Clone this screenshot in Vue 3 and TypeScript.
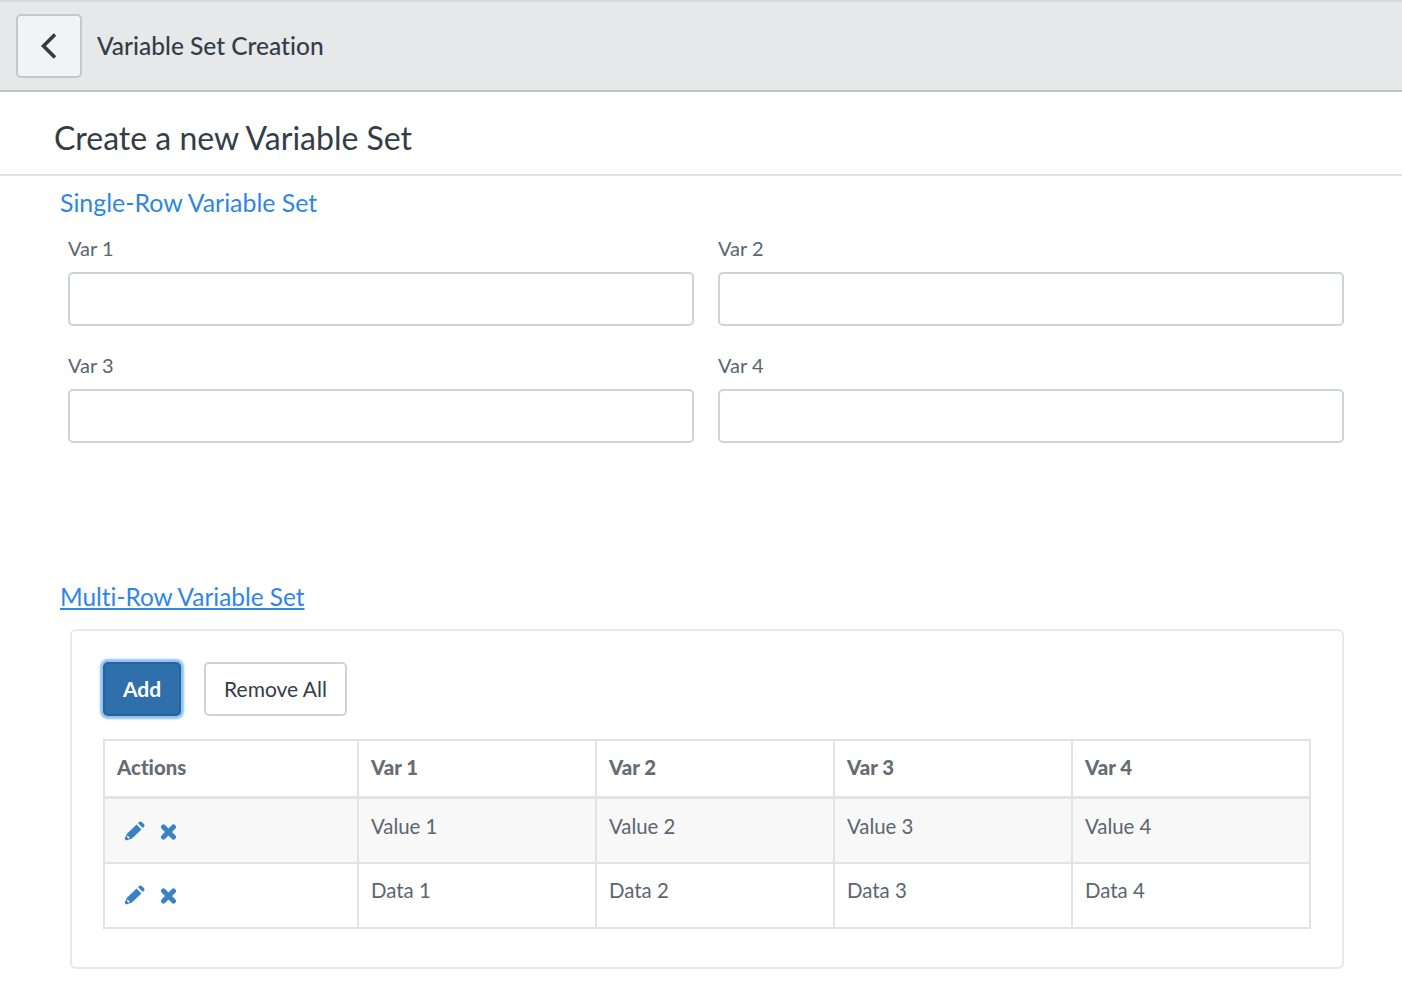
<template>
  <div class="page">
    <header class="top-bar">
      <button class="back-btn" aria-label="Back">
        <svg width="18" height="28" viewBox="0 0 18 28" fill="none" stroke="#343d47" stroke-width="3.6">
          <path d="M15 2.5 L3.5 14 L15 25.5" />
        </svg>
      </button>
      <h1 class="top-title">Variable Set Creation</h1>
    </header>

    <div class="heading-row">
      <h2>Create a new Variable Set</h2>
    </div>

    <section class="single-row">
      <h3 class="section-title">Single-Row Variable Set</h3>
      <div class="field-grid">
        <div v-for="field in fields" :key="field" class="field">
          <label>{{ field }}</label>
          <input type="text" />
        </div>
      </div>
    </section>

    <section class="multi-row">
      <h3 class="section-title linked"><a href="#">Multi-Row Variable Set</a></h3>
      <div class="panel">
        <div class="toolbar">
          <button class="btn btn-primary">Add</button>
          <button class="btn btn-default">Remove All</button>
        </div>
        <table>
          <thead>
            <tr>
              <th class="col-actions">Actions</th>
              <th v-for="field in fields" :key="field">{{ field }}</th>
            </tr>
          </thead>
          <tbody>
            <tr v-for="(row, i) in rows" :key="i" :class="{ striped: i === 0 }">
              <td class="actions-cell">
                <svg class="icon" width="21" height="20" viewBox="0 0 21 20" fill="#3b82c4">
                  <path d="M12.6 3.6 L17.4 8.4 L8 17.6 L2.2 19.6 L0.6 18 L2.9 12.8 Z" />
                  <path d="M14 2.2 L15.2 1 C16 0.2 17 0.2 17.8 1 L20 3.2 C20.8 4 20.8 5 20 5.8 L18.8 7 Z" />
                  <path d="M3.6 14.6 L5.9 16.9 L4.4 17.5 L3 16.1 Z" fill="#fff" />
                </svg>
                <svg class="icon" width="17" height="16" viewBox="0 0 17 16" fill="none" stroke="#3b82c4" stroke-width="5" stroke-linecap="round">
                  <path d="M3.5 3 L13.5 13 M13.5 3 L3.5 13" />
                </svg>
              </td>
              <td v-for="cell in row" :key="cell">{{ cell }}</td>
            </tr>
          </tbody>
        </table>
      </div>
    </section>
  </div>
</template>

<script setup lang="ts">
const fields: string[] = ['Var 1', 'Var 2', 'Var 3', 'Var 4'];

const rows: string[][] = [
  ['Value 1', 'Value 2', 'Value 3', 'Value 4'],
  ['Data 1', 'Data 2', 'Data 3', 'Data 4']
];
</script>

<style>
html, body {
  margin: 0;
  background: #fff;
}
</style>

<style scoped>
.page {
  height: 1006px;
  overflow: hidden;
  font-family: Lato, "Noto Sans", sans-serif;
  font-variant-ligatures: none;
  color: #343d47;
}

.top-bar {
  display: flex;
  align-items: center;
  box-sizing: border-box;
  height: 92px;
  padding-left: 16px;
  background: #e6e8ea;
  border-top: 2px solid #d5d7da;
  border-bottom: 2px solid #bfc2c6;
}

.back-btn {
  display: flex;
  align-items: center;
  justify-content: center;
  box-sizing: border-box;
  width: 66px;
  height: 64px;
  padding: 0;
  background: #f2f3f5;
  border: 2px solid #c4c7cb;
  border-radius: 5px;
}

.top-title {
  margin: 0 0 0 15px;
  font-size: 24.5px;
  font-weight: 500;
  line-height: 1;
}

.heading-row {
  box-sizing: border-box;
  height: 84px;
  padding: 27px 0 0 54px;
  border-bottom: 2px solid #dfe1e3;
}

.heading-row h2 {
  margin: 0;
  font-size: 32px;
  font-weight: 400;
  line-height: 38px;
}

.section-title {
  margin: 0 0 0 60px;
  font-size: 24.9px;
  font-weight: 400;
  line-height: 32px;
  color: #2f86e4;
}

.section-title.linked {
  font-size: 24.4px;
}

.section-title a {
  color: #2f86e4;
}

.single-row {
  padding-top: 10px;
}

.field-grid {
  display: grid;
  grid-template-columns: 626px 626px;
  column-gap: 24px;
  row-gap: 27px;
  margin: 18px 0 0 68px;
}

.field label {
  display: block;
  font-size: 20px;
  line-height: 24px;
  color: #5b6670;
}

.field input {
  display: block;
  box-sizing: border-box;
  width: 100%;
  height: 54px;
  margin-top: 12px;
  border: 2px solid #d0d3d6;
  border-radius: 5px;
  background: #fff;
}

.multi-row {
  padding-top: 138px;
}

.panel {
  box-sizing: border-box;
  width: 1274px;
  height: 340px;
  margin: 16px 0 0 70px;
  padding: 31px 30px 0;
  border: 2px solid #e8e9eb;
  border-radius: 6px;
}

.toolbar {
  display: flex;
  align-items: center;
  gap: 23px;
}

.btn {
  box-sizing: border-box;
  height: 54px;
  padding: 0 0 2px;
  font-family: inherit;
  font-size: 21px;
  border-radius: 5px;
}

.btn-primary {
  width: 78px;
  margin-left: 1px;
  color: #fff;
  font-weight: 700;
  background: #2f6fab;
  border: 2px solid #2a639a;
  box-shadow: 0 0 2px 3px #8fc3f5;
}

.btn-default {
  width: 143px;
  color: #343d47;
  background: #fff;
  border: 2px solid #d0d3d6;
}

table {
  width: 1208px;
  margin: 23px 0 0 1px;
  border-collapse: collapse;
  table-layout: fixed;
  font-size: 20.4px;
}

th, td {
  border: 2px solid #e2e3e5;
  padding: 0 0 0 12px;
  text-align: left;
  vertical-align: top;
  box-sizing: border-box;
}

th {
  height: 57px;
  padding-bottom: 2px;
  vertical-align: middle;
  font-weight: 900;
  color: #666c72;
  border-bottom-width: 3px;
}

.col-actions {
  width: 254px;
}

td {
  height: 65px;
  padding-top: 13px;
  line-height: 26px;
  color: #5b6670;
}

.striped td {
  height: 66px;
  padding-top: 14px;
  background: #f8f8f8;
}

td.actions-cell {
  padding-top: 21px;
  padding-left: 19px;
}

.striped td.actions-cell {
  padding-top: 22px;
}

.icon {
  vertical-align: top;
}

.icon + .icon {
  margin: 3px 0 0 15px;
}
</style>
